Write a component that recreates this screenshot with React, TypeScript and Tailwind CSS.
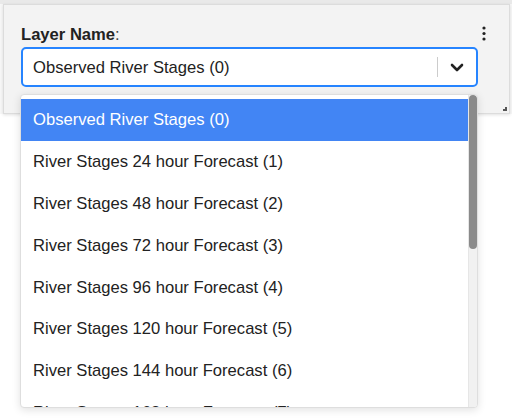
const options = [
  'Observed River Stages (0)',
  'River Stages 24 hour Forecast (1)',
  'River Stages 48 hour Forecast (2)',
  'River Stages 72 hour Forecast (3)',
  'River Stages 96 hour Forecast (4)',
  'River Stages 120 hour Forecast (5)',
  'River Stages 144 hour Forecast (6)',
  'River Stages 168 hour Forecast (7)',
  'River Stages 192 hour Forecast (8)',
  'River Stages 216 hour Forecast (9)',
  'River Stages 240 hour Forecast (10)',
];

export default function App() {
  return (
    <div className="relative w-[512px] h-[418px] overflow-hidden bg-white font-['Liberation_Sans',Arial,sans-serif] text-[16.6px] text-[#222]">
      {/* top shade */}
      <div className="bg-[linear-gradient(#e9e9e9,#e9e9e9_4px,#f7f7f7_4px)] pt-[4px] pl-[3px] pr-[2px]">
        <div className="relative h-[110px] bg-[#f3f3f3] border border-[#dcdcdc] shadow-[0_1px_3px_rgba(0,0,0,0.12)] pl-[17px] pt-[20px]">
          <div className="leading-[19px]">
            <span className="font-bold">Layer Name</span>
            <span className="text-[#444]">:</span>
          </div>
          <button className="absolute right-[22px] top-[21px]">
            <svg width="6" height="15" viewBox="0 0 6 15">
              <circle cx="3" cy="2" r="1.6" fill="#222" />
              <circle cx="3" cy="7.5" r="1.6" fill="#222" />
              <circle cx="3" cy="13" r="1.6" fill="#222" />
            </svg>
          </button>

          <div className="mt-[3px] w-[457px] h-[40px] bg-white border-2 border-[#2684ff] rounded-[5px] flex items-center">
            <div className="flex-1 pl-[10px] leading-[19px]">Observed River Stages (0)</div>
            <div className="w-px h-[20px] bg-[#cccccc]" />
            <div className="w-[38px] flex justify-center">
              <svg width="14" height="9" viewBox="0 0 14 9" fill="none">
                <path d="M2 2 L7 7 L12 2" stroke="#222" strokeWidth="2.6" strokeLinecap="round" strokeLinejoin="round" />
              </svg>
            </div>
          </div>

          {/* resize grip */}
          <div className="absolute right-[2px] bottom-[2px] w-[4px] h-[4px] border-r-2 border-b-2 border-[#555]" />
        </div>
      </div>

      {/* dropdown menu */}
      <div className="absolute left-[20px] top-[94px] w-[458px] h-[314px] bg-white border border-[#dedede] rounded-[4px] shadow-[0_2px_8px_rgba(0,0,0,0.12)] overflow-hidden">
        <div className="pt-[4px] pr-[9px]">
          {options.map((o, i) => (
            <div
              key={o}
              className={`h-[41.8px] flex items-center px-[12px] leading-[19px] ${i === 0 ? 'bg-[#4285f4] text-white' : ''}`}
            >
              {o}
            </div>
          ))}
        </div>
        {/* scrollbar */}
        <div className="absolute right-0 top-0 bottom-0 w-[9px] bg-[#f1f1f1] border-l border-[#e6e6e6]">
          <div className="h-[154px] w-[8px] bg-[#8a8a8a] rounded-[4px]" />
        </div>
      </div>
    </div>
  );
}
